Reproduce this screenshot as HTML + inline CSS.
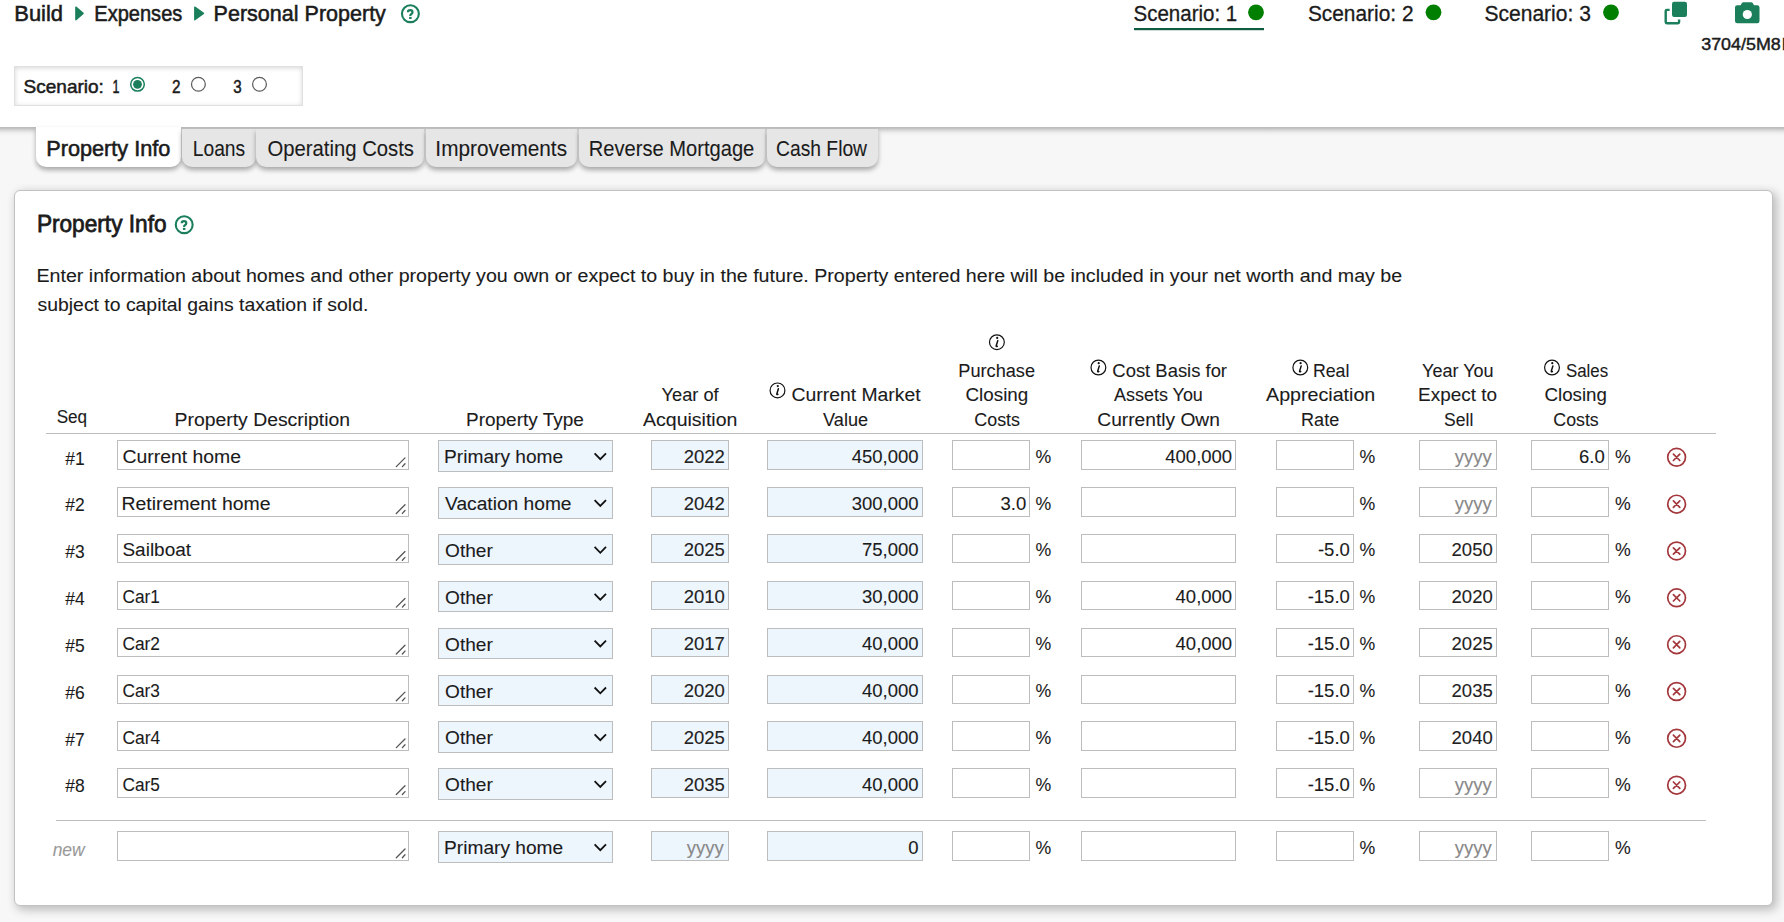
<!DOCTYPE html>
<html><head><meta charset="utf-8"><style>
html,body{margin:0;padding:0}
body{width:1784px;height:922px;overflow:hidden;background:#fff;position:relative;font-family:"Liberation Sans",sans-serif}
.a{position:absolute}
.gray{position:absolute;left:0;top:127px;width:1784px;height:795px;background:#f7f7f7}
.gshadow{position:absolute;left:0;top:127px;width:1784px;height:10px;background:linear-gradient(#bababa 0,#c3c3c3 1.5px,#d6d6d6 3px,#e6e6e6 4.7px,#f0f0f0 6.3px,#f5f5f5 8px,#f7f7f7 10px)}
.sbox{position:absolute;left:14px;top:66px;width:289px;height:40px;box-sizing:border-box;border:1px solid #e0e0e0;box-shadow:inset 0 1px 5px rgba(0,0,0,.16)}
.tab{position:absolute;top:128.5px;height:38.5px;background:#e6e6e6;border-radius:0 0 10px 10px;box-shadow:0 3px 5px rgba(0,0,0,.33)}
.tab.act{background:#fff;top:127px;height:40px}
.card{position:absolute;left:14px;top:190px;width:1759px;height:716px;background:#fff;border:1px solid #c2c2c2;box-sizing:border-box;border-radius:6px;box-shadow:3px 3px 10px 1px rgba(0,0,0,.24)}
.inp{position:absolute;box-sizing:border-box;border:1.3px solid #bdbdbd;background:#fff}
.blue{background:#edf5fd}
.hl{position:absolute;height:1.3px;background:#bdbdbd}
svg{position:absolute;left:0;top:0}
text{font-family:"Liberation Sans",sans-serif}
</style></head><body>
<div class="sbox"></div>
<div class="gray"></div>
<div class="gshadow"></div>
<div class="tab act" style="left:35.5px;width:145.5px"></div>
<div class="tab" style="left:181.6px;width:74px"></div>
<div class="tab" style="left:256.3px;width:168px"></div>
<div class="tab" style="left:425.5px;width:151.8px"></div>
<div class="tab" style="left:579px;width:186px"></div>
<div class="tab" style="left:766.8px;width:111.6px"></div>
<div class="card"></div>
<div class="hl" style="left:46px;top:433px;width:1670px"></div>
<div class="hl" style="left:56px;top:820px;width:1650px"></div>
<div class="inp" style="left:117px;top:440.30px;width:292px;height:29.50px"></div>
<div class="inp blue" style="left:438px;top:440.30px;width:175px;height:31.50px"></div>
<div class="inp blue" style="left:651px;top:440.30px;width:78px;height:29.50px"></div>
<div class="inp blue" style="left:767px;top:440.30px;width:156px;height:29.50px"></div>
<div class="inp" style="left:952px;top:440.30px;width:78px;height:29.50px"></div>
<div class="inp" style="left:1081px;top:440.30px;width:155px;height:29.50px"></div>
<div class="inp" style="left:1276px;top:440.30px;width:78px;height:29.50px"></div>
<div class="inp" style="left:1419px;top:440.30px;width:78px;height:29.50px"></div>
<div class="inp" style="left:1531px;top:440.30px;width:78px;height:29.50px"></div>
<div class="inp" style="left:117px;top:487.14px;width:292px;height:29.50px"></div>
<div class="inp blue" style="left:438px;top:487.14px;width:175px;height:31.50px"></div>
<div class="inp blue" style="left:651px;top:487.14px;width:78px;height:29.50px"></div>
<div class="inp blue" style="left:767px;top:487.14px;width:156px;height:29.50px"></div>
<div class="inp" style="left:952px;top:487.14px;width:78px;height:29.50px"></div>
<div class="inp" style="left:1081px;top:487.14px;width:155px;height:29.50px"></div>
<div class="inp" style="left:1276px;top:487.14px;width:78px;height:29.50px"></div>
<div class="inp" style="left:1419px;top:487.14px;width:78px;height:29.50px"></div>
<div class="inp" style="left:1531px;top:487.14px;width:78px;height:29.50px"></div>
<div class="inp" style="left:117px;top:533.98px;width:292px;height:29.50px"></div>
<div class="inp blue" style="left:438px;top:533.98px;width:175px;height:31.50px"></div>
<div class="inp blue" style="left:651px;top:533.98px;width:78px;height:29.50px"></div>
<div class="inp blue" style="left:767px;top:533.98px;width:156px;height:29.50px"></div>
<div class="inp" style="left:952px;top:533.98px;width:78px;height:29.50px"></div>
<div class="inp" style="left:1081px;top:533.98px;width:155px;height:29.50px"></div>
<div class="inp" style="left:1276px;top:533.98px;width:78px;height:29.50px"></div>
<div class="inp" style="left:1419px;top:533.98px;width:78px;height:29.50px"></div>
<div class="inp" style="left:1531px;top:533.98px;width:78px;height:29.50px"></div>
<div class="inp" style="left:117px;top:580.82px;width:292px;height:29.50px"></div>
<div class="inp blue" style="left:438px;top:580.82px;width:175px;height:31.50px"></div>
<div class="inp blue" style="left:651px;top:580.82px;width:78px;height:29.50px"></div>
<div class="inp blue" style="left:767px;top:580.82px;width:156px;height:29.50px"></div>
<div class="inp" style="left:952px;top:580.82px;width:78px;height:29.50px"></div>
<div class="inp" style="left:1081px;top:580.82px;width:155px;height:29.50px"></div>
<div class="inp" style="left:1276px;top:580.82px;width:78px;height:29.50px"></div>
<div class="inp" style="left:1419px;top:580.82px;width:78px;height:29.50px"></div>
<div class="inp" style="left:1531px;top:580.82px;width:78px;height:29.50px"></div>
<div class="inp" style="left:117px;top:627.66px;width:292px;height:29.50px"></div>
<div class="inp blue" style="left:438px;top:627.66px;width:175px;height:31.50px"></div>
<div class="inp blue" style="left:651px;top:627.66px;width:78px;height:29.50px"></div>
<div class="inp blue" style="left:767px;top:627.66px;width:156px;height:29.50px"></div>
<div class="inp" style="left:952px;top:627.66px;width:78px;height:29.50px"></div>
<div class="inp" style="left:1081px;top:627.66px;width:155px;height:29.50px"></div>
<div class="inp" style="left:1276px;top:627.66px;width:78px;height:29.50px"></div>
<div class="inp" style="left:1419px;top:627.66px;width:78px;height:29.50px"></div>
<div class="inp" style="left:1531px;top:627.66px;width:78px;height:29.50px"></div>
<div class="inp" style="left:117px;top:674.50px;width:292px;height:29.50px"></div>
<div class="inp blue" style="left:438px;top:674.50px;width:175px;height:31.50px"></div>
<div class="inp blue" style="left:651px;top:674.50px;width:78px;height:29.50px"></div>
<div class="inp blue" style="left:767px;top:674.50px;width:156px;height:29.50px"></div>
<div class="inp" style="left:952px;top:674.50px;width:78px;height:29.50px"></div>
<div class="inp" style="left:1081px;top:674.50px;width:155px;height:29.50px"></div>
<div class="inp" style="left:1276px;top:674.50px;width:78px;height:29.50px"></div>
<div class="inp" style="left:1419px;top:674.50px;width:78px;height:29.50px"></div>
<div class="inp" style="left:1531px;top:674.50px;width:78px;height:29.50px"></div>
<div class="inp" style="left:117px;top:721.34px;width:292px;height:29.50px"></div>
<div class="inp blue" style="left:438px;top:721.34px;width:175px;height:31.50px"></div>
<div class="inp blue" style="left:651px;top:721.34px;width:78px;height:29.50px"></div>
<div class="inp blue" style="left:767px;top:721.34px;width:156px;height:29.50px"></div>
<div class="inp" style="left:952px;top:721.34px;width:78px;height:29.50px"></div>
<div class="inp" style="left:1081px;top:721.34px;width:155px;height:29.50px"></div>
<div class="inp" style="left:1276px;top:721.34px;width:78px;height:29.50px"></div>
<div class="inp" style="left:1419px;top:721.34px;width:78px;height:29.50px"></div>
<div class="inp" style="left:1531px;top:721.34px;width:78px;height:29.50px"></div>
<div class="inp" style="left:117px;top:768.18px;width:292px;height:29.50px"></div>
<div class="inp blue" style="left:438px;top:768.18px;width:175px;height:31.50px"></div>
<div class="inp blue" style="left:651px;top:768.18px;width:78px;height:29.50px"></div>
<div class="inp blue" style="left:767px;top:768.18px;width:156px;height:29.50px"></div>
<div class="inp" style="left:952px;top:768.18px;width:78px;height:29.50px"></div>
<div class="inp" style="left:1081px;top:768.18px;width:155px;height:29.50px"></div>
<div class="inp" style="left:1276px;top:768.18px;width:78px;height:29.50px"></div>
<div class="inp" style="left:1419px;top:768.18px;width:78px;height:29.50px"></div>
<div class="inp" style="left:1531px;top:768.18px;width:78px;height:29.50px"></div>
<div class="inp" style="left:117px;top:831.40px;width:292px;height:29.50px"></div>
<div class="inp blue" style="left:438px;top:831.40px;width:175px;height:31.50px"></div>
<div class="inp blue" style="left:651px;top:831.40px;width:78px;height:29.50px"></div>
<div class="inp blue" style="left:767px;top:831.40px;width:156px;height:29.50px"></div>
<div class="inp" style="left:952px;top:831.40px;width:78px;height:29.50px"></div>
<div class="inp" style="left:1081px;top:831.40px;width:155px;height:29.50px"></div>
<div class="inp" style="left:1276px;top:831.40px;width:78px;height:29.50px"></div>
<div class="inp" style="left:1419px;top:831.40px;width:78px;height:29.50px"></div>
<div class="inp" style="left:1531px;top:831.40px;width:78px;height:29.50px"></div>
<svg width="1784" height="922" viewBox="0 0 1784 922">
<circle cx="1676.6" cy="457.3" r="8.9" fill="none" stroke="#a3373c" stroke-width="1.7"/><path d="M1673.3999999999999 454.1 L1679.8 460.5 M1679.8 454.1 L1673.3999999999999 460.5" stroke="#a3373c" stroke-width="1.7" stroke-linecap="round"/>
<circle cx="1676.6" cy="504.14" r="8.9" fill="none" stroke="#a3373c" stroke-width="1.7"/><path d="M1673.3999999999999 500.94 L1679.8 507.34 M1679.8 500.94 L1673.3999999999999 507.34" stroke="#a3373c" stroke-width="1.7" stroke-linecap="round"/>
<circle cx="1676.6" cy="550.98" r="8.9" fill="none" stroke="#a3373c" stroke-width="1.7"/><path d="M1673.3999999999999 547.78 L1679.8 554.1800000000001 M1679.8 547.78 L1673.3999999999999 554.1800000000001" stroke="#a3373c" stroke-width="1.7" stroke-linecap="round"/>
<circle cx="1676.6" cy="597.82" r="8.9" fill="none" stroke="#a3373c" stroke-width="1.7"/><path d="M1673.3999999999999 594.62 L1679.8 601.0200000000001 M1679.8 594.62 L1673.3999999999999 601.0200000000001" stroke="#a3373c" stroke-width="1.7" stroke-linecap="round"/>
<circle cx="1676.6" cy="644.6600000000001" r="8.9" fill="none" stroke="#a3373c" stroke-width="1.7"/><path d="M1673.3999999999999 641.46 L1679.8 647.8600000000001 M1679.8 641.46 L1673.3999999999999 647.8600000000001" stroke="#a3373c" stroke-width="1.7" stroke-linecap="round"/>
<circle cx="1676.6" cy="691.5" r="8.9" fill="none" stroke="#a3373c" stroke-width="1.7"/><path d="M1673.3999999999999 688.3 L1679.8 694.7 M1679.8 688.3 L1673.3999999999999 694.7" stroke="#a3373c" stroke-width="1.7" stroke-linecap="round"/>
<circle cx="1676.6" cy="738.34" r="8.9" fill="none" stroke="#a3373c" stroke-width="1.7"/><path d="M1673.3999999999999 735.14 L1679.8 741.5400000000001 M1679.8 735.14 L1673.3999999999999 741.5400000000001" stroke="#a3373c" stroke-width="1.7" stroke-linecap="round"/>
<circle cx="1676.6" cy="785.1800000000001" r="8.9" fill="none" stroke="#a3373c" stroke-width="1.7"/><path d="M1673.3999999999999 781.98 L1679.8 788.3800000000001 M1679.8 781.98 L1673.3999999999999 788.3800000000001" stroke="#a3373c" stroke-width="1.7" stroke-linecap="round"/>
<circle cx="777.5" cy="390.4" r="7.4" fill="none" stroke="#111" stroke-width="1.2"/><circle cx="777.8" cy="386.09999999999997" r="1.1" fill="#111"/><path d="M778.4 388.79999999999995 L776.8 394.0 Q776.6 395.0 777.9 394.4" fill="none" stroke="#111" stroke-width="1.5" stroke-linecap="round"/>
<circle cx="996.9" cy="342.2" r="7.4" fill="none" stroke="#111" stroke-width="1.2"/><circle cx="997.1999999999999" cy="337.9" r="1.1" fill="#111"/><path d="M997.8 340.59999999999997 L996.1999999999999 345.8 Q996.0 346.8 997.3 346.2" fill="none" stroke="#111" stroke-width="1.5" stroke-linecap="round"/>
<circle cx="1098.4" cy="367.5" r="7.4" fill="none" stroke="#111" stroke-width="1.2"/><circle cx="1098.7" cy="363.2" r="1.1" fill="#111"/><path d="M1099.3000000000002 365.9 L1097.7 371.1 Q1097.5 372.1 1098.8000000000002 371.5" fill="none" stroke="#111" stroke-width="1.5" stroke-linecap="round"/>
<circle cx="1300.3" cy="367.5" r="7.4" fill="none" stroke="#111" stroke-width="1.2"/><circle cx="1300.6" cy="363.2" r="1.1" fill="#111"/><path d="M1301.2 365.9 L1299.6 371.1 Q1299.3999999999999 372.1 1300.7 371.5" fill="none" stroke="#111" stroke-width="1.5" stroke-linecap="round"/>
<circle cx="1552" cy="367.5" r="7.4" fill="none" stroke="#111" stroke-width="1.2"/><circle cx="1552.3" cy="363.2" r="1.1" fill="#111"/><path d="M1552.9 365.9 L1551.3 371.1 Q1551.1 372.1 1552.4 371.5" fill="none" stroke="#111" stroke-width="1.5" stroke-linecap="round"/>
<circle cx="410.4" cy="13.7" r="8.45" fill="none" stroke="#1a7f5a" stroke-width="2.1"/><path d="M407.9 12.2 Q407.9 10.1 410.2 10.1 Q412.5 10.1 412.5 12.2 Q412.5 13.399999999999999 411.0 14.2 Q410.29999999999995 14.6 410.29999999999995 15.899999999999999" fill="none" stroke="#1a7f5a" stroke-width="2.2"/><rect x="409.09999999999997" y="16.9" width="2.5" height="2.1" fill="#1a7f5a"/>
<circle cx="184.2" cy="224.7" r="8.45" fill="none" stroke="#1a7f5a" stroke-width="2.1"/><path d="M181.7 223.2 Q181.7 221.1 184.0 221.1 Q186.29999999999998 221.1 186.29999999999998 223.2 Q186.29999999999998 224.39999999999998 184.79999999999998 225.2 Q184.1 225.6 184.1 226.89999999999998" fill="none" stroke="#1a7f5a" stroke-width="2.2"/><rect x="182.89999999999998" y="227.89999999999998" width="2.5" height="2.1" fill="#1a7f5a"/>
<path d="M75.9 7.1 L83.1 13.4 L75.9 19.7 Z" fill="#1a7f5a" stroke="#1a7f5a" stroke-width="1.4" stroke-linejoin="round"/>
<path d="M194.8 7.1 L203.5 13.4 L194.8 19.8 Z" fill="#1a7f5a" stroke="#1a7f5a" stroke-width="1.4" stroke-linejoin="round"/>
<circle cx="1256" cy="12.3" r="7.9" fill="#007f00"/>
<circle cx="1433.5" cy="12.3" r="7.9" fill="#007f00"/>
<circle cx="1611" cy="12.3" r="7.9" fill="#007f00"/>
<rect x="1134" y="28" width="130" height="2.2" fill="#0f5c3e"/>
<circle cx="137.5" cy="84.3" r="6.8" fill="#fff" stroke="#1a7f5a" stroke-width="1.5"/><circle cx="137.5" cy="84.3" r="4.4" fill="#1a7f5a"/>
<circle cx="198.4" cy="84.3" r="6.9" fill="#fff" stroke="#5c5c5c" stroke-width="1.25"/>
<circle cx="259.5" cy="84.3" r="6.9" fill="#fff" stroke="#5c5c5c" stroke-width="1.25"/>
<rect x="1672" y="1.8" width="15" height="15.2" rx="2.2" fill="#1a7f5a"/><path d="M1669.6 9.9 L1666.9 9.9 Q1665.7 9.9 1665.7 11.1 L1665.7 22.1 Q1665.7 23.2 1666.8 23.2 L1678 23.2 Q1679.1 23.2 1679.1 22.1 L1679.1 19.4" fill="none" stroke="#1a7f5a" stroke-width="2.4"/>
<path d="M1740.6 5.2 L1741.9 3.0 Q1742.4 2.3 1743.4 2.3 L1751.2 2.3 Q1752.2 2.3 1752.7 3.0 L1754 5.2 L1757.3 5.2 Q1759.5 5.2 1759.5 7.6 L1759.5 21.1 Q1759.5 23.3 1757.3 23.3 L1737.3 23.3 Q1735 23.3 1735 21.1 L1735 7.6 Q1735 5.2 1737.3 5.2 Z" fill="#1a7f5a"/><circle cx="1747.3" cy="14.5" r="4.6" fill="#fff"/>
<path d="M594.6 453.3 L600.3 459.1 L606 453.3" fill="none" stroke="#111" stroke-width="1.8"/>
<path d="M396.3 466.6 L405 457.90000000000003 M402.4 466.6 L405 463.7" stroke="#555" stroke-width="1.3" stroke-linecap="round"/>
<path d="M594.6 500.14 L600.3 505.94 L606 500.14" fill="none" stroke="#111" stroke-width="1.8"/>
<path d="M396.3 513.4399999999999 L405 504.74 M402.4 513.4399999999999 L405 510.53999999999996" stroke="#555" stroke-width="1.3" stroke-linecap="round"/>
<path d="M594.6 546.98 L600.3 552.7800000000001 L606 546.98" fill="none" stroke="#111" stroke-width="1.8"/>
<path d="M396.3 560.28 L405 551.58 M402.4 560.28 L405 557.38" stroke="#555" stroke-width="1.3" stroke-linecap="round"/>
<path d="M594.6 593.82 L600.3 599.6200000000001 L606 593.82" fill="none" stroke="#111" stroke-width="1.8"/>
<path d="M396.3 607.12 L405 598.4200000000001 M402.4 607.12 L405 604.22" stroke="#555" stroke-width="1.3" stroke-linecap="round"/>
<path d="M594.6 640.6600000000001 L600.3 646.4600000000002 L606 640.6600000000001" fill="none" stroke="#111" stroke-width="1.8"/>
<path d="M396.3 653.96 L405 645.2600000000001 M402.4 653.96 L405 651.0600000000001" stroke="#555" stroke-width="1.3" stroke-linecap="round"/>
<path d="M594.6 687.5 L600.3 693.3000000000001 L606 687.5" fill="none" stroke="#111" stroke-width="1.8"/>
<path d="M396.3 700.8 L405 692.1 M402.4 700.8 L405 697.9" stroke="#555" stroke-width="1.3" stroke-linecap="round"/>
<path d="M594.6 734.34 L600.3 740.1400000000001 L606 734.34" fill="none" stroke="#111" stroke-width="1.8"/>
<path d="M396.3 747.64 L405 738.94 M402.4 747.64 L405 744.74" stroke="#555" stroke-width="1.3" stroke-linecap="round"/>
<path d="M594.6 781.1800000000001 L600.3 786.9800000000001 L606 781.1800000000001" fill="none" stroke="#111" stroke-width="1.8"/>
<path d="M396.3 794.48 L405 785.7800000000001 M402.4 794.48 L405 791.58" stroke="#555" stroke-width="1.3" stroke-linecap="round"/>
<path d="M594.6 844.4 L600.3 850.2 L606 844.4" fill="none" stroke="#111" stroke-width="1.8"/>
<path d="M396.3 857.6999999999999 L405 849.0 M402.4 857.6999999999999 L405 854.8" stroke="#555" stroke-width="1.3" stroke-linecap="round"/>
<text transform="translate(14.29,20.90) scale(0.9884,1)" font-size="22.2" fill="#1b1b1b" style="stroke:#1b1b1b;stroke-width:0.55">Build</text>
<text transform="translate(94.37,20.90) scale(0.9025,1)" font-size="22.2" fill="#1b1b1b" style="stroke:#1b1b1b;stroke-width:0.55">Expenses</text>
<text transform="translate(213.61,20.90) scale(0.9699,1)" font-size="22.2" fill="#1b1b1b" style="stroke:#1b1b1b;stroke-width:0.55">Personal Property</text>
<text transform="translate(1133.52,20.60) scale(0.9323,1)" font-size="22" fill="#1b1b1b" style="stroke:#1b1b1b;stroke-width:0.3">Scenario: 1</text>
<text transform="translate(1307.90,20.60) scale(0.9495,1)" font-size="22" fill="#1b1b1b" style="stroke:#1b1b1b;stroke-width:0.3">Scenario: 2</text>
<text transform="translate(1484.49,20.60) scale(0.9559,1)" font-size="22" fill="#1b1b1b" style="stroke:#1b1b1b;stroke-width:0.3">Scenario: 3</text>
<text transform="translate(1701.22,49.70) scale(1.0531,1)" font-size="17" fill="#1b1b1b" style="stroke:#1b1b1b;stroke-width:0.45">3704/5M8</text>
<text transform="translate(1781.90,49.70) scale(0.8227,1)" font-size="17" fill="#1b1b1b" style="stroke:#1b1b1b;stroke-width:0.45">R</text>
<text transform="translate(23.55,92.70) scale(1.0451,1)" font-size="18.2" fill="#1b1b1b" style="stroke:#1b1b1b;stroke-width:0.5">Scenario:</text>
<text transform="translate(112.56,92.70) scale(0.6889,1)" font-size="18.2" fill="#1b1b1b" style="stroke:#1b1b1b;stroke-width:0.5">1</text>
<text transform="translate(172.05,92.70) scale(0.8400,1)" font-size="18.2" fill="#1b1b1b" style="stroke:#1b1b1b;stroke-width:0.5">2</text>
<text transform="translate(233.25,92.70) scale(0.8300,1)" font-size="18.2" fill="#1b1b1b" style="stroke:#1b1b1b;stroke-width:0.5">3</text>
<text transform="translate(46.25,156.20) scale(1.0229,1)" font-size="21.2" fill="#1b1b1b" style="stroke:#1b1b1b;stroke-width:0.55">Property Info</text>
<text transform="translate(192.74,156.20) scale(0.9085,1)" font-size="21.2" fill="#1b1b1b" style="stroke:#1b1b1b;stroke-width:0.1">Loans</text>
<text transform="translate(267.39,156.20) scale(0.9571,1)" font-size="21.2" fill="#1b1b1b" style="stroke:#1b1b1b;stroke-width:0.1">Operating Costs</text>
<text transform="translate(435.37,156.20) scale(0.9809,1)" font-size="21.2" fill="#1b1b1b" style="stroke:#1b1b1b;stroke-width:0.1">Improvements</text>
<text transform="translate(588.80,156.20) scale(0.9495,1)" font-size="21.2" fill="#1b1b1b" style="stroke:#1b1b1b;stroke-width:0.1">Reverse Mortgage</text>
<text transform="translate(776.04,156.20) scale(0.9090,1)" font-size="21.2" fill="#1b1b1b" style="stroke:#1b1b1b;stroke-width:0.1">Cash Flow</text>
<text transform="translate(36.89,232.00) scale(0.9851,1)" font-size="23" fill="#1b1b1b" style="stroke:#1b1b1b;stroke-width:0.75">Property Info</text>
<text transform="translate(36.49,281.80) scale(1.0616,1)" font-size="18.5" fill="#1b1b1b" style="stroke:#1b1b1b;stroke-width:0.1">Enter information about homes and other property you own or expect to buy in the future. Property entered here will be included in your net worth and may be</text>
<text transform="translate(37.55,310.50) scale(1.0487,1)" font-size="18.5" fill="#1b1b1b" style="stroke:#1b1b1b;stroke-width:0.1">subject to capital gains taxation if sold.</text>
<text transform="translate(56.65,423.00) scale(0.9256,1)" font-size="18.5" fill="#1b1b1b" style="stroke:#1b1b1b;stroke-width:0.1">Seq</text>
<text transform="translate(174.50,426.00) scale(1.0487,1)" font-size="18.5" fill="#1b1b1b" style="stroke:#1b1b1b;stroke-width:0.1">Property Description</text>
<text transform="translate(466.02,426.00) scale(1.0266,1)" font-size="18.5" fill="#1b1b1b" style="stroke:#1b1b1b;stroke-width:0.1">Property Type</text>
<text transform="translate(661.55,401.40) scale(0.9863,1)" font-size="18.5" fill="#1b1b1b" style="stroke:#1b1b1b;stroke-width:0.1">Year of</text>
<text transform="translate(643.05,426.00) scale(1.0552,1)" font-size="18.5" fill="#1b1b1b" style="stroke:#1b1b1b;stroke-width:0.1">Acquisition</text>
<text transform="translate(791.55,401.40) scale(1.0469,1)" font-size="18.5" fill="#1b1b1b" style="stroke:#1b1b1b;stroke-width:0.1">Current Market</text>
<text transform="translate(823.05,426.00) scale(0.9813,1)" font-size="18.5" fill="#1b1b1b" style="stroke:#1b1b1b;stroke-width:0.1">Value</text>
<text transform="translate(958.27,376.70) scale(0.9835,1)" font-size="18.5" fill="#1b1b1b" style="stroke:#1b1b1b;stroke-width:0.1">Purchase</text>
<text transform="translate(965.55,401.40) scale(1.0162,1)" font-size="18.5" fill="#1b1b1b" style="stroke:#1b1b1b;stroke-width:0.1">Closing</text>
<text transform="translate(974.35,426.00) scale(0.9652,1)" font-size="18.5" fill="#1b1b1b" style="stroke:#1b1b1b;stroke-width:0.1">Costs</text>
<text transform="translate(1112.35,376.70) scale(0.9966,1)" font-size="18.5" fill="#1b1b1b" style="stroke:#1b1b1b;stroke-width:0.1">Cost Basis for</text>
<text transform="translate(1114.05,401.40) scale(0.9707,1)" font-size="18.5" fill="#1b1b1b" style="stroke:#1b1b1b;stroke-width:0.1">Assets You</text>
<text transform="translate(1097.35,426.00) scale(1.0370,1)" font-size="18.5" fill="#1b1b1b" style="stroke:#1b1b1b;stroke-width:0.1">Currently Own</text>
<text transform="translate(1312.89,376.70) scale(0.9600,1)" font-size="18.5" fill="#1b1b1b" style="stroke:#1b1b1b;stroke-width:0.1">Real</text>
<text transform="translate(1266.05,401.40) scale(1.0619,1)" font-size="18.5" fill="#1b1b1b" style="stroke:#1b1b1b;stroke-width:0.1">Appreciation</text>
<text transform="translate(1301.07,426.00) scale(0.9765,1)" font-size="18.5" fill="#1b1b1b" style="stroke:#1b1b1b;stroke-width:0.1">Rate</text>
<text transform="translate(1422.05,376.70) scale(0.9748,1)" font-size="18.5" fill="#1b1b1b" style="stroke:#1b1b1b;stroke-width:0.1">Year You</text>
<text transform="translate(1418.03,401.40) scale(1.0246,1)" font-size="18.5" fill="#1b1b1b" style="stroke:#1b1b1b;stroke-width:0.1">Expect to</text>
<text transform="translate(1444.05,426.00) scale(0.9483,1)" font-size="18.5" fill="#1b1b1b" style="stroke:#1b1b1b;stroke-width:0.1">Sell</text>
<text transform="translate(1565.95,376.70) scale(0.9125,1)" font-size="18.5" fill="#1b1b1b" style="stroke:#1b1b1b;stroke-width:0.1">Sales</text>
<text transform="translate(1544.55,401.40) scale(1.0113,1)" font-size="18.5" fill="#1b1b1b" style="stroke:#1b1b1b;stroke-width:0.1">Closing</text>
<text transform="translate(1553.35,426.00) scale(0.9588,1)" font-size="18.5" fill="#1b1b1b" style="stroke:#1b1b1b;stroke-width:0.1">Costs</text>
<text transform="translate(65.35,464.60) scale(0.9695,1)" font-size="18" fill="#1b1b1b" style="stroke:#1b1b1b;stroke-width:0.1">#1</text>
<text transform="translate(122.45,462.80) scale(1.0486,1)" font-size="18.5" fill="#1b1b1b" style="stroke:#1b1b1b;stroke-width:0.1">Current home</text>
<text transform="translate(444.01,463.30) scale(1.0356,1)" font-size="18.5" fill="#1b1b1b" style="stroke:#1b1b1b;stroke-width:0.1">Primary home</text>
<text transform="translate(1035.45,462.80) scale(0.9563,1)" font-size="18.5" fill="#1b1b1b" style="stroke:#1b1b1b;stroke-width:0.1">%</text>
<text transform="translate(1359.45,462.80) scale(0.9563,1)" font-size="18.5" fill="#1b1b1b" style="stroke:#1b1b1b;stroke-width:0.1">%</text>
<text transform="translate(1614.95,462.80) scale(0.9563,1)" font-size="18.5" fill="#1b1b1b" style="stroke:#1b1b1b;stroke-width:0.1">%</text>
<text transform="translate(683.68,462.80) scale(1.0000,1)" font-size="18.5" fill="#222" style="stroke:#222;stroke-width:0.1">2022</text>
<text transform="translate(851.67,462.80) scale(1.0000,1)" font-size="18.5" fill="#1b1b1b" style="stroke:#1b1b1b;stroke-width:0.1">450,000</text>
<text transform="translate(1165.27,462.80) scale(1.0000,1)" font-size="18.5" fill="#1b1b1b" style="stroke:#1b1b1b;stroke-width:0.1">400,000</text>
<text transform="translate(1454.70,462.80) scale(1.0000,1)" font-size="18.5" fill="#888" style="stroke:#888;stroke-width:0.1">yyyy</text>
<text transform="translate(1579.02,462.80) scale(1.0000,1)" font-size="18.5" fill="#1b1b1b" style="stroke:#1b1b1b;stroke-width:0.1">6.0</text>
<text transform="translate(65.35,511.44) scale(0.9695,1)" font-size="18" fill="#1b1b1b" style="stroke:#1b1b1b;stroke-width:0.1">#2</text>
<text transform="translate(121.40,509.64) scale(1.0519,1)" font-size="18.5" fill="#1b1b1b" style="stroke:#1b1b1b;stroke-width:0.1">Retirement home</text>
<text transform="translate(445.05,510.14) scale(1.0374,1)" font-size="18.5" fill="#1b1b1b" style="stroke:#1b1b1b;stroke-width:0.1">Vacation home</text>
<text transform="translate(1035.45,509.64) scale(0.9563,1)" font-size="18.5" fill="#1b1b1b" style="stroke:#1b1b1b;stroke-width:0.1">%</text>
<text transform="translate(1359.45,509.64) scale(0.9563,1)" font-size="18.5" fill="#1b1b1b" style="stroke:#1b1b1b;stroke-width:0.1">%</text>
<text transform="translate(1614.95,509.64) scale(0.9563,1)" font-size="18.5" fill="#1b1b1b" style="stroke:#1b1b1b;stroke-width:0.1">%</text>
<text transform="translate(683.68,509.64) scale(1.0000,1)" font-size="18.5" fill="#222" style="stroke:#222;stroke-width:0.1">2042</text>
<text transform="translate(851.67,509.64) scale(1.0000,1)" font-size="18.5" fill="#1b1b1b" style="stroke:#1b1b1b;stroke-width:0.1">300,000</text>
<text transform="translate(1000.52,509.64) scale(1.0000,1)" font-size="18.5" fill="#1b1b1b" style="stroke:#1b1b1b;stroke-width:0.1">3.0</text>
<text transform="translate(1454.70,509.64) scale(1.0000,1)" font-size="18.5" fill="#888" style="stroke:#888;stroke-width:0.1">yyyy</text>
<text transform="translate(65.35,558.28) scale(0.9695,1)" font-size="18" fill="#1b1b1b" style="stroke:#1b1b1b;stroke-width:0.1">#3</text>
<text transform="translate(122.45,556.48) scale(1.0268,1)" font-size="18.5" fill="#1b1b1b" style="stroke:#1b1b1b;stroke-width:0.1">Sailboat</text>
<text transform="translate(445.05,556.98) scale(1.0324,1)" font-size="18.5" fill="#1b1b1b" style="stroke:#1b1b1b;stroke-width:0.1">Other</text>
<text transform="translate(1035.45,556.48) scale(0.9563,1)" font-size="18.5" fill="#1b1b1b" style="stroke:#1b1b1b;stroke-width:0.1">%</text>
<text transform="translate(1359.45,556.48) scale(0.9563,1)" font-size="18.5" fill="#1b1b1b" style="stroke:#1b1b1b;stroke-width:0.1">%</text>
<text transform="translate(1614.95,556.48) scale(0.9563,1)" font-size="18.5" fill="#1b1b1b" style="stroke:#1b1b1b;stroke-width:0.1">%</text>
<text transform="translate(683.68,556.48) scale(1.0000,1)" font-size="18.5" fill="#222" style="stroke:#222;stroke-width:0.1">2025</text>
<text transform="translate(861.95,556.48) scale(1.0000,1)" font-size="18.5" fill="#1b1b1b" style="stroke:#1b1b1b;stroke-width:0.1">75,000</text>
<text transform="translate(1317.96,556.48) scale(1.0000,1)" font-size="18.5" fill="#1b1b1b" style="stroke:#1b1b1b;stroke-width:0.1">-5.0</text>
<text transform="translate(1451.58,556.48) scale(1.0000,1)" font-size="18.5" fill="#222" style="stroke:#222;stroke-width:0.1">2050</text>
<text transform="translate(65.35,605.12) scale(0.9695,1)" font-size="18" fill="#1b1b1b" style="stroke:#1b1b1b;stroke-width:0.1">#4</text>
<text transform="translate(122.45,603.32) scale(0.9319,1)" font-size="18.5" fill="#1b1b1b" style="stroke:#1b1b1b;stroke-width:0.1">Car1</text>
<text transform="translate(445.05,603.82) scale(1.0324,1)" font-size="18.5" fill="#1b1b1b" style="stroke:#1b1b1b;stroke-width:0.1">Other</text>
<text transform="translate(1035.45,603.32) scale(0.9563,1)" font-size="18.5" fill="#1b1b1b" style="stroke:#1b1b1b;stroke-width:0.1">%</text>
<text transform="translate(1359.45,603.32) scale(0.9563,1)" font-size="18.5" fill="#1b1b1b" style="stroke:#1b1b1b;stroke-width:0.1">%</text>
<text transform="translate(1614.95,603.32) scale(0.9563,1)" font-size="18.5" fill="#1b1b1b" style="stroke:#1b1b1b;stroke-width:0.1">%</text>
<text transform="translate(683.68,603.32) scale(1.0000,1)" font-size="18.5" fill="#222" style="stroke:#222;stroke-width:0.1">2010</text>
<text transform="translate(861.95,603.32) scale(1.0000,1)" font-size="18.5" fill="#1b1b1b" style="stroke:#1b1b1b;stroke-width:0.1">30,000</text>
<text transform="translate(1175.55,603.32) scale(1.0000,1)" font-size="18.5" fill="#1b1b1b" style="stroke:#1b1b1b;stroke-width:0.1">40,000</text>
<text transform="translate(1307.67,603.32) scale(1.0000,1)" font-size="18.5" fill="#1b1b1b" style="stroke:#1b1b1b;stroke-width:0.1">-15.0</text>
<text transform="translate(1451.58,603.32) scale(1.0000,1)" font-size="18.5" fill="#222" style="stroke:#222;stroke-width:0.1">2020</text>
<text transform="translate(65.35,651.96) scale(0.9695,1)" font-size="18" fill="#1b1b1b" style="stroke:#1b1b1b;stroke-width:0.1">#5</text>
<text transform="translate(122.45,650.16) scale(0.9370,1)" font-size="18.5" fill="#1b1b1b" style="stroke:#1b1b1b;stroke-width:0.1">Car2</text>
<text transform="translate(445.05,650.66) scale(1.0324,1)" font-size="18.5" fill="#1b1b1b" style="stroke:#1b1b1b;stroke-width:0.1">Other</text>
<text transform="translate(1035.45,650.16) scale(0.9563,1)" font-size="18.5" fill="#1b1b1b" style="stroke:#1b1b1b;stroke-width:0.1">%</text>
<text transform="translate(1359.45,650.16) scale(0.9563,1)" font-size="18.5" fill="#1b1b1b" style="stroke:#1b1b1b;stroke-width:0.1">%</text>
<text transform="translate(1614.95,650.16) scale(0.9563,1)" font-size="18.5" fill="#1b1b1b" style="stroke:#1b1b1b;stroke-width:0.1">%</text>
<text transform="translate(683.68,650.16) scale(1.0000,1)" font-size="18.5" fill="#222" style="stroke:#222;stroke-width:0.1">2017</text>
<text transform="translate(861.95,650.16) scale(1.0000,1)" font-size="18.5" fill="#1b1b1b" style="stroke:#1b1b1b;stroke-width:0.1">40,000</text>
<text transform="translate(1175.55,650.16) scale(1.0000,1)" font-size="18.5" fill="#1b1b1b" style="stroke:#1b1b1b;stroke-width:0.1">40,000</text>
<text transform="translate(1307.67,650.16) scale(1.0000,1)" font-size="18.5" fill="#1b1b1b" style="stroke:#1b1b1b;stroke-width:0.1">-15.0</text>
<text transform="translate(1451.58,650.16) scale(1.0000,1)" font-size="18.5" fill="#222" style="stroke:#222;stroke-width:0.1">2025</text>
<text transform="translate(65.35,698.80) scale(0.9695,1)" font-size="18" fill="#1b1b1b" style="stroke:#1b1b1b;stroke-width:0.1">#6</text>
<text transform="translate(122.45,697.00) scale(0.9319,1)" font-size="18.5" fill="#1b1b1b" style="stroke:#1b1b1b;stroke-width:0.1">Car3</text>
<text transform="translate(445.05,697.50) scale(1.0324,1)" font-size="18.5" fill="#1b1b1b" style="stroke:#1b1b1b;stroke-width:0.1">Other</text>
<text transform="translate(1035.45,697.00) scale(0.9563,1)" font-size="18.5" fill="#1b1b1b" style="stroke:#1b1b1b;stroke-width:0.1">%</text>
<text transform="translate(1359.45,697.00) scale(0.9563,1)" font-size="18.5" fill="#1b1b1b" style="stroke:#1b1b1b;stroke-width:0.1">%</text>
<text transform="translate(1614.95,697.00) scale(0.9563,1)" font-size="18.5" fill="#1b1b1b" style="stroke:#1b1b1b;stroke-width:0.1">%</text>
<text transform="translate(683.68,697.00) scale(1.0000,1)" font-size="18.5" fill="#222" style="stroke:#222;stroke-width:0.1">2020</text>
<text transform="translate(861.95,697.00) scale(1.0000,1)" font-size="18.5" fill="#1b1b1b" style="stroke:#1b1b1b;stroke-width:0.1">40,000</text>
<text transform="translate(1307.67,697.00) scale(1.0000,1)" font-size="18.5" fill="#1b1b1b" style="stroke:#1b1b1b;stroke-width:0.1">-15.0</text>
<text transform="translate(1451.58,697.00) scale(1.0000,1)" font-size="18.5" fill="#222" style="stroke:#222;stroke-width:0.1">2035</text>
<text transform="translate(65.35,745.64) scale(0.9695,1)" font-size="18" fill="#1b1b1b" style="stroke:#1b1b1b;stroke-width:0.1">#7</text>
<text transform="translate(122.45,743.84) scale(0.9420,1)" font-size="18.5" fill="#1b1b1b" style="stroke:#1b1b1b;stroke-width:0.1">Car4</text>
<text transform="translate(445.05,744.34) scale(1.0324,1)" font-size="18.5" fill="#1b1b1b" style="stroke:#1b1b1b;stroke-width:0.1">Other</text>
<text transform="translate(1035.45,743.84) scale(0.9563,1)" font-size="18.5" fill="#1b1b1b" style="stroke:#1b1b1b;stroke-width:0.1">%</text>
<text transform="translate(1359.45,743.84) scale(0.9563,1)" font-size="18.5" fill="#1b1b1b" style="stroke:#1b1b1b;stroke-width:0.1">%</text>
<text transform="translate(1614.95,743.84) scale(0.9563,1)" font-size="18.5" fill="#1b1b1b" style="stroke:#1b1b1b;stroke-width:0.1">%</text>
<text transform="translate(683.68,743.84) scale(1.0000,1)" font-size="18.5" fill="#222" style="stroke:#222;stroke-width:0.1">2025</text>
<text transform="translate(861.95,743.84) scale(1.0000,1)" font-size="18.5" fill="#1b1b1b" style="stroke:#1b1b1b;stroke-width:0.1">40,000</text>
<text transform="translate(1307.67,743.84) scale(1.0000,1)" font-size="18.5" fill="#1b1b1b" style="stroke:#1b1b1b;stroke-width:0.1">-15.0</text>
<text transform="translate(1451.58,743.84) scale(1.0000,1)" font-size="18.5" fill="#222" style="stroke:#222;stroke-width:0.1">2040</text>
<text transform="translate(65.35,792.48) scale(0.9695,1)" font-size="18" fill="#1b1b1b" style="stroke:#1b1b1b;stroke-width:0.1">#8</text>
<text transform="translate(122.45,790.68) scale(0.9319,1)" font-size="18.5" fill="#1b1b1b" style="stroke:#1b1b1b;stroke-width:0.1">Car5</text>
<text transform="translate(445.05,791.18) scale(1.0324,1)" font-size="18.5" fill="#1b1b1b" style="stroke:#1b1b1b;stroke-width:0.1">Other</text>
<text transform="translate(1035.45,790.68) scale(0.9563,1)" font-size="18.5" fill="#1b1b1b" style="stroke:#1b1b1b;stroke-width:0.1">%</text>
<text transform="translate(1359.45,790.68) scale(0.9563,1)" font-size="18.5" fill="#1b1b1b" style="stroke:#1b1b1b;stroke-width:0.1">%</text>
<text transform="translate(1614.95,790.68) scale(0.9563,1)" font-size="18.5" fill="#1b1b1b" style="stroke:#1b1b1b;stroke-width:0.1">%</text>
<text transform="translate(683.68,790.68) scale(1.0000,1)" font-size="18.5" fill="#222" style="stroke:#222;stroke-width:0.1">2035</text>
<text transform="translate(861.95,790.68) scale(1.0000,1)" font-size="18.5" fill="#1b1b1b" style="stroke:#1b1b1b;stroke-width:0.1">40,000</text>
<text transform="translate(1307.67,790.68) scale(1.0000,1)" font-size="18.5" fill="#1b1b1b" style="stroke:#1b1b1b;stroke-width:0.1">-15.0</text>
<text transform="translate(1454.70,790.68) scale(1.0000,1)" font-size="18.5" fill="#888" style="stroke:#888;stroke-width:0.1">yyyy</text>
<text transform="translate(52.65,855.70) scale(0.9444,1)" font-size="18.5" fill="#999" style="stroke:#999;stroke-width:0.1;font-style:italic">new</text>
<text transform="translate(444.01,854.40) scale(1.0356,1)" font-size="18.5" fill="#1b1b1b" style="stroke:#1b1b1b;stroke-width:0.1">Primary home</text>
<text transform="translate(1035.45,853.90) scale(0.9563,1)" font-size="18.5" fill="#1b1b1b" style="stroke:#1b1b1b;stroke-width:0.1">%</text>
<text transform="translate(1359.45,853.90) scale(0.9563,1)" font-size="18.5" fill="#1b1b1b" style="stroke:#1b1b1b;stroke-width:0.1">%</text>
<text transform="translate(1614.95,853.90) scale(0.9563,1)" font-size="18.5" fill="#1b1b1b" style="stroke:#1b1b1b;stroke-width:0.1">%</text>
<text transform="translate(686.80,853.90) scale(1.0000,1)" font-size="18.5" fill="#888" style="stroke:#888;stroke-width:0.1">yyyy</text>
<text transform="translate(908.25,853.90) scale(1.0000,1)" font-size="18.5" fill="#1b1b1b" style="stroke:#1b1b1b;stroke-width:0.1">0</text>
<text transform="translate(1454.70,853.90) scale(1.0000,1)" font-size="18.5" fill="#888" style="stroke:#888;stroke-width:0.1">yyyy</text>
</svg>
</body></html>
